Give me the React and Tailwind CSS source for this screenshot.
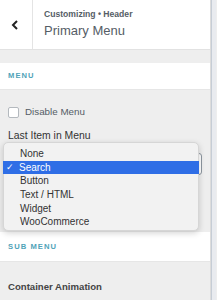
import React from "react";

export default function App() {
  const items = ["None", "Search", "Button", "Text / HTML", "Widget", "WooCommerce"];
  return (
    <div className="w-[217px] h-[300px] flex overflow-hidden font-['Liberation_Sans',Arial,sans-serif] bg-[#eeeeee]">
      <div className="w-[211px] flex flex-col bg-[#eeeeee] relative border-r border-[#dcdcdc]">
        {/* header */}
        <div className="h-[50px] flex bg-white border-b border-[#e2e2e2] shrink-0">
          <div className="w-[33px] border-r border-[#e4e4e4] flex items-center justify-center">
            <svg width="8" height="10" viewBox="0 0 8 10" className="mr-[2px]">
              <path d="M6 1 L2 5 L6 9" fill="none" stroke="#222" strokeWidth="2" />
            </svg>
          </div>
          <div className="pl-[11px] pt-[9px] flex flex-col">
            <div className="text-[8.6px] leading-[11px] font-bold text-[#555d66]">Customizing • Header</div>
            <div className="text-[13px] leading-[16px] mt-[3px] text-[#555d66]">Primary Menu</div>
          </div>
        </div>
        <div className="h-[13px] shrink-0"></div>
        {/* MENU band */}
        <div className="h-[27px] bg-white flex items-center px-[8px] shrink-0 border-b border-[#e6e6e6]">
          <span className="text-[7.6px] font-bold tracking-[0.14em] text-[#4fa3b8]">MENU</span>
        </div>
        <div className="px-[8px] pt-[16px] shrink-0">
          <div className="flex items-center h-[12px]">
            <div className="w-[11px] h-[11px] bg-white border border-[#b4b9be] rounded-[2px]"></div>
            <span className="ml-[6px] text-[9.8px] text-[#555d66]">Disable Menu</span>
          </div>
          <div className="mt-[12px] text-[10.4px] leading-[12px] text-[#333]">Last Item in Menu</div>
          <div className="mt-[11px] h-[22px] bg-white border border-[#8d96a0] rounded-[3px] flex items-center justify-end pr-[3px]">
            <svg width="5" height="9" viewBox="0 0 5 9">
              <path d="M1 3.5 L2.5 1.5 L4 3.5 M1 5.5 L2.5 7.5 L4 5.5" fill="none" stroke="#555" strokeWidth="1" />
            </svg>
          </div>
        </div>
        <div className="h-[57px] shrink-0"></div>
        {/* SUB MENU band */}
        <div className="h-[30px] bg-white flex items-center px-[8px] shrink-0 border-b border-[#e6e6e6]">
          <span className="text-[7.6px] font-bold tracking-[0.14em] text-[#4fa3b8]">SUB MENU</span>
        </div>
        <div className="px-[8px] pt-[18px]">
          <div className="text-[9.6px] font-bold text-[#444]">Container Animation</div>
        </div>

        {/* dropdown overlay */}
        <div className="absolute left-[3px] top-[142px] w-[196px] h-[89px] bg-[#f2f2f2] rounded-[5px] border border-[#d6d6d6] shadow-[0_2px_6px_rgba(0,0,0,0.18)] pt-[4px]">
          {items.map((it) => (
            <div
              key={it}
              className={
                it === "Search"
                  ? "h-[13.7px] flex items-center bg-[#2f6ee6] text-white -mx-[1px]"
                  : "h-[13.7px] flex items-center text-[#333]"
              }
            >
              <span className="w-[16px] pl-[3px] text-[9px] leading-none">{it === "Search" ? "✓" : ""}</span>
              <span className="text-[10px] leading-none">{it}</span>
            </div>
          ))}
        </div>
      </div>
      <div className="w-[5px] bg-[#e9ebef] border-l border-[#c6cdd6]"></div>
    </div>
  );
}
